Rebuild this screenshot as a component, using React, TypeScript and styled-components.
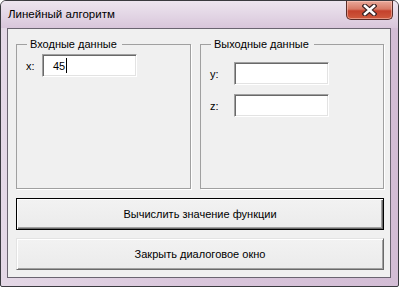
import React from 'react';
import styled, { createGlobalStyle } from 'styled-components';

const GlobalStyle = createGlobalStyle`
  html, body {
    margin: 0;
    padding: 0;
    background: #ffffff;
  }
  body {
    font-family: "Liberation Sans", Arial, sans-serif;
    font-size: 11px;
    color: #000;
  }
`;

const Window = styled.div`
  box-sizing: border-box;
  width: 399px;
  height: 287px;
  display: flex;
  flex-direction: column;
  border: 1px solid #3a3a3f;
  border-radius: 6px 6px 2px 2px;
  background: linear-gradient(90deg, #e4d8e6 0%, #dac7dc 45%, #d3bdd5 100%);
  overflow: hidden;
`;

const TitleBar = styled.div`
  height: 27px;
  display: flex;
  align-items: flex-start;
  justify-content: space-between;
  background: linear-gradient(180deg, #ede5ef 0%, #e1d3e3 60%, #d9c6db 100%);
`;

const Title = styled.span`
  margin: 6px 0 0 7px;
  font-size: 11.5px;
  line-height: 15px;
`;

const CloseButton = styled.div`
  width: 45px;
  height: 18px;
  margin-right: 5px;
  display: flex;
  align-items: center;
  justify-content: center;
  border: 1px solid #5a2c28;
  border-top: none;
  border-radius: 0 0 5px 5px;
  background: linear-gradient(180deg, #e9a99a 0%, #d77a66 45%, #c4412c 55%, #cf5a3e 100%);
  box-shadow: inset 0 0 0 1px rgba(255, 210, 200, 0.5);
`;

const Client = styled.div`
  flex: 1;
  margin: 0 7px 8px 6px;
  display: flex;
  flex-direction: column;
  gap: 8px;
  padding: 9px 6px 7px 8px;
  background: #f0f0f0;
  border: 1px solid #6a6470;
`;

const GroupsRow = styled.div`
  flex: 1;
  display: flex;
  gap: 9px;
  margin-bottom: 1px;
`;

const GroupBox = styled.fieldset<{ $width: number; $top: number }>`
  box-sizing: border-box;
  width: ${(p) => p.$width}px;
  margin: 0;
  padding: ${(p) => p.$top}px 0 0 9px;
  border: 1px solid #a0a0a0;
  box-shadow: 1px 1px 0 #ffffff;
  display: flex;
  flex-direction: column;
  gap: 9px;
  min-width: 0;
`;

const Legend = styled.legend`
  margin-left: 1px;
  padding: 0 5px 0 3px;
  font-size: 11px;
  line-height: 13px;
  color: #000;
`;

const FieldRow = styled.div`
  display: flex;
  align-items: center;
`;

const Label = styled.span<{ $width: number }>`
  width: ${(p) => p.$width}px;
  font-size: 11px;
`;

const TextBox = styled.div`
  box-sizing: border-box;
  width: 95px;
  height: 23px;
  display: flex;
  align-items: center;
  padding-left: 10px;
  background: #ffffff;
  border: 1px solid;
  border-color: #a0a0a0 #ffffff #ffffff #a0a0a0;
  box-shadow: inset 1px 1px 0 #696969, inset -1px -1px 0 #e3e3e3;
  font-size: 11px;
`;

const Caret = styled.span`
  width: 1px;
  height: 15px;
  margin-left: 1px;
  background: #000;
`;

const PushButton = styled.div<{ $default?: boolean }>`
  box-sizing: border-box;
  height: 32px;
  display: flex;
  align-items: center;
  justify-content: center;
  font-size: 11px;
  background: linear-gradient(180deg, #f2f2f2 0%, #ebebeb 100%);
  border: 1px solid ${(p) => (p.$default ? '#000000' : '#e3e3e3')};
  border-right-color: ${(p) => (p.$default ? '#000000' : '#696969')};
  border-bottom-color: ${(p) => (p.$default ? '#000000' : '#696969')};
  box-shadow: ${(p) =>
    p.$default
      ? 'inset 1px 1px 0 #ffffff, inset -1px -1px 0 #696969, inset -2px -2px 0 #a0a0a0'
      : 'inset 1px 1px 0 #ffffff, inset -1px -1px 0 #a0a0a0'};
`;

const CloseIcon = () => (
  <svg width="15" height="12" viewBox="0 0 15 12">
    <path
      d="M3 2 L12 10 M12 2 L3 10"
      stroke="#3d2424"
      strokeWidth="5"
      strokeLinecap="square"
    />
    <path
      d="M3 2 L12 10 M12 2 L3 10"
      stroke="#ffffff"
      strokeWidth="2.6"
      strokeLinecap="square"
    />
  </svg>
);

const App = () => {
  return (
    <>
      <GlobalStyle />
      <Window>
        <TitleBar>
          <Title>Линейный алгоритм</Title>
          <CloseButton>
            <CloseIcon />
          </CloseButton>
        </TitleBar>
        <Client>
          <GroupsRow>
            <GroupBox $width={175} $top={3}>
              <Legend>Входные данные</Legend>
              <FieldRow>
                <Label $width={16}>x:</Label>
                <TextBox>
                  45
                  <Caret />
                </TextBox>
              </FieldRow>
            </GroupBox>
            <GroupBox $width={184} $top={11}>
              <Legend>Выходные данные</Legend>
              <FieldRow>
                <Label $width={24}>y:</Label>
                <TextBox />
              </FieldRow>
              <FieldRow>
                <Label $width={24}>z:</Label>
                <TextBox />
              </FieldRow>
            </GroupBox>
          </GroupsRow>
          <PushButton $default>Вычислить значение функции</PushButton>
          <PushButton>Закрыть диалоговое окно</PushButton>
        </Client>
      </Window>
    </>
  );
};

export default App;
